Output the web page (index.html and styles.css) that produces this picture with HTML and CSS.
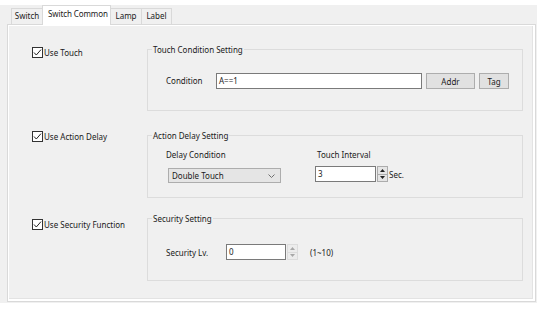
FILE: index.html
```html
<!DOCTYPE html>
<html lang="en">
<head>
    <meta charset="UTF-8">
    <title>Switch Common</title>
    <link rel="stylesheet" href="styles.css">
</head>
<body>
    <div class="dialog">
        <div class="tabs">
            <div class="tab tab-switch">Switch</div>
            <div class="tab tab-common active">Switch Common</div>
            <div class="tab tab-lamp">Lamp</div>
            <div class="tab tab-label">Label</div>
        </div>

        <div class="pane">
            <div class="page">
                <!-- Touch -->
                <div class="row row-touch">
                    <label class="check">
                        <svg class="box" width="11" height="11" viewBox="0 0 11 11">
                            <rect x="0.5" y="0.5" width="10" height="10" fill="#fff" stroke="#333"/>
                            <polyline points="2,5.5 4.3,8 9,2.6" fill="none" stroke="#222" stroke-width="1"/>
                        </svg>
                        <span>Use Touch</span>
                    </label>
                    <fieldset class="group">
                        <legend>Touch Condition Setting</legend>
                        <div class="group-body cond-line">
                            <span class="label cond-label">Condition</span>
                            <div class="textbox cond-input">A==1</div>
                            <button class="btn btn-addr">Addr</button>
                            <button class="btn btn-tag">Tag</button>
                        </div>
                    </fieldset>
                </div>

                <!-- Action delay -->
                <div class="row row-delay">
                    <label class="check">
                        <svg class="box" width="11" height="11" viewBox="0 0 11 11">
                            <rect x="0.5" y="0.5" width="10" height="10" fill="#fff" stroke="#333"/>
                            <polyline points="2,5.5 4.3,8 9,2.6" fill="none" stroke="#222" stroke-width="1"/>
                        </svg>
                        <span>Use Action Delay</span>
                    </label>
                    <fieldset class="group">
                        <legend>Action Delay Setting</legend>
                        <div class="group-body delay-cols">
                            <div class="col col-cond">
                                <span class="label">Delay Condition</span>
                                <div class="combo">
                                    <span>Double Touch</span>
                                    <svg width="7" height="4" viewBox="0 0 7 4">
                                        <polyline points="0.5,0.5 3.5,3.5 6.5,0.5" fill="none" stroke="#707070"/>
                                    </svg>
                                </div>
                            </div>
                            <div class="col col-interval">
                                <span class="label">Touch Interval</span>
                                <div class="spin-line">
                                    <div class="textbox interval-input">3</div>
                                    <div class="spin">
                                        <span class="spin-btn"><svg width="5" height="3" viewBox="0 0 5 3"><polygon points="0,3 2.5,0 5,3" fill="#222"/></svg></span>
                                        <span class="spin-btn"><svg width="5" height="3" viewBox="0 0 5 3"><polygon points="0,0 2.5,3 5,0" fill="#222"/></svg></span>
                                    </div>
                                    <span class="unit">Sec.</span>
                                </div>
                            </div>
                        </div>
                    </fieldset>
                </div>

                <!-- Security -->
                <div class="row row-security">
                    <label class="check">
                        <svg class="box" width="11" height="11" viewBox="0 0 11 11">
                            <rect x="0.5" y="0.5" width="10" height="10" fill="#fff" stroke="#333"/>
                            <polyline points="2,5.5 4.3,8 9,2.6" fill="none" stroke="#222" stroke-width="1"/>
                        </svg>
                        <span>Use Security Function</span>
                    </label>
                    <fieldset class="group">
                        <legend>Security Setting</legend>
                        <div class="group-body level-line">
                            <span class="label level-label">Security Lv.</span>
                            <div class="textbox level-input">0</div>
                            <div class="spin spin-off">
                                <span class="spin-btn"><svg width="5" height="3" viewBox="0 0 5 3"><polygon points="0,3 2.5,0 5,3" fill="#a8a8a8"/></svg></span>
                                <span class="spin-btn"><svg width="5" height="3" viewBox="0 0 5 3"><polygon points="0,0 2.5,3 5,0" fill="#a8a8a8"/></svg></span>
                            </div>
                            <span class="range">(1~10)</span>
                        </div>
                    </fieldset>
                </div>
            </div>
        </div>
    </div>
</body>
</html>
```

FILE: styles.css
```css
/* General */
body {
    margin: 0;
    background: #ffffff;
    font-family: "Noto Sans", "Open Sans", sans-serif;
    font-size: 8px;
    color: #1a1a1a;
}

.dialog {
    margin-top: 5px;
    width: 537px;
    height: 298px;
    background: #f0f0f0;
}

/* Tabs */
.tabs {
    display: flex;
    align-items: flex-end;
    height: 19px;
    padding-left: 11px;
    position: relative;
    z-index: 1;
}

.tab {
    box-sizing: border-box;
    height: 16px;
    border: 1px solid #d9d9d9;
    border-bottom: none;
    background: #f0f0f0;
    line-height: 14px;
    text-align: center;
    white-space: nowrap;
    margin-left: -1px;
}

.tab-switch { width: 32px; margin-left: 0; }
.tab-common { width: 69px; }
.tab-lamp { width: 32px; }
.tab-label { width: 31px; }

.tab.active {
    height: 20px;
    background: #ffffff;
    line-height: 15px;
    margin-bottom: -1px;
    letter-spacing: -0.1px;
    text-align: left;
    padding-left: 5px;
}

/* Pane */
.pane {
    box-sizing: border-box;
    margin-left: 7px;
    width: 529px;
    height: 278px;
    border: 1px solid #d9d9d9;
    background: #ffffff;
    padding: 1px 2px 2px 1px;
}

.page {
    box-sizing: border-box;
    height: 100%;
    background: #f0f0f0;
    border-right: 1px solid #e3e3e3;
    border-bottom: 1px solid #e3e3e3;
    padding-left: 23px;
}

/* Rows */
.row {
    display: flex;
    align-items: flex-start;
}

.row-touch { padding-top: 18px; }
.row-delay { margin-top: 19px; }
.row-security { margin-top: 15px; }

.check {
    display: flex;
    align-items: center;
    width: 115px;
    height: 11px;
    gap: 1px;
}

.row-touch .check { margin-top: 3px; }
.row-delay .check { margin-top: 1px; }
.row-security .check { margin-top: 6px; }

/* Group boxes */
.group {
    box-sizing: border-box;
    width: 376px;
    margin: 0;
    padding: 0 0 0 4px;
    min-width: 0;
    border: 1px solid #dcdcdc;
}

.group legend {
    padding: 0 1px;
    line-height: 11px;
}

.group-body {
    margin-left: 14px;
}

.label {
    line-height: 11px;
}

.textbox {
    box-sizing: border-box;
    height: 16px;
    border: 1px solid #7a7a7a;
    background: #ffffff;
    padding-left: 2px;
    line-height: 14px;
}

/* Touch condition */
.cond-line {
    display: flex;
    align-items: center;
    margin-top: 17px;
    margin-bottom: 21px;
}

.cond-label { width: 50px; }
.cond-input { width: 206px; }

.btn {
    box-sizing: border-box;
    height: 16px;
    margin: 1px 0 0 4px;
    padding: 0;
    border: 1px solid #adadad;
    background: #e1e1e1;
    font: inherit;
    color: inherit;
}

.btn-addr { width: 49px; }
.btn-tag { width: 30px; }

/* Action delay */
.delay-cols {
    display: flex;
    margin-top: 8px;
    margin-bottom: 14px;
}

.col {
    display: flex;
    flex-direction: column;
}

.col-cond { width: 149px; }

.combo {
    box-sizing: border-box;
    display: flex;
    align-items: center;
    justify-content: space-between;
    width: 113px;
    height: 15px;
    margin: 8px 0 0 2px;
    padding: 0 5px 0 3px;
    border: 1px solid #adadad;
    background: #e5e5e5;
}

.col-interval .label { padding-left: 2px; }

.spin-line {
    display: flex;
    align-items: center;
    margin-top: 6px;
}

.interval-input { width: 61px; }

.spin {
    display: flex;
    flex-direction: column;
    width: 11px;
    height: 16px;
    margin-left: 1px;
}

.spin-btn {
    box-sizing: border-box;
    flex: 1;
    display: flex;
    align-items: center;
    justify-content: center;
    border: 1px solid #acacac;
    background: #e5e5e5;
}

.spin-btn + .spin-btn { border-top: none; }

.spin-off .spin-btn {
    border-color: #dcdcdc;
    background: #ececec;
}

.unit { margin-left: 1px; }

/* Security */
.level-line {
    display: flex;
    align-items: center;
    margin-top: 20px;
    margin-bottom: 20px;
}

.level-label { width: 60px; }
.level-input { width: 60px; }
.level-line .spin { margin-left: 1px; }
.range { margin-left: 12px; }
```
